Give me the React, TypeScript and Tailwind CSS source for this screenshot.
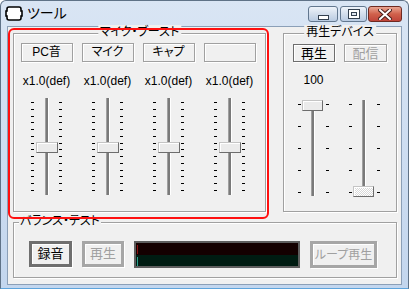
import React from 'react';

const ui = "font-['Liberation_Sans','Noto_Sans_CJK_JP',sans-serif] [font-feature-settings:'palt']";
const etched = 'shadow-[1px_1px_0_#fff,inset_1px_1px_0_#fff]';

interface TrackBarProps {
  ticks: number;
  thumbTop: number;
  wide?: boolean;
  focused?: boolean;
}

// vertical trackbar: ticks on both sides, thumb lies over the groove
const TrackBar: React.FC<TrackBarProps> = ({ ticks, thumbTop, wide, focused }) => {
  const tickCol = (extra: string) => (
    <div className={`flex flex-col justify-between w-[3px] pt-[4px] ${wide ? 'pb-[4px]' : 'pb-[5px]'} ${extra}`}>
      {Array.from({ length: ticks }).map((_, i) => (
        <div key={i} className="h-px bg-black" />
      ))}
    </div>
  );

  return (
    <div className={`flex ${wide ? 'h-[97px]' : 'h-[98px]'}`}>
      {tickCol('')}
      <div className={`relative flex ${wide ? 'w-[25px] pl-[10px]' : 'w-[24px] pl-[11px]'}`}>
        <div className="w-[4px] mb-[1px] border-l border-l-[#a0a0a0] border-r border-r-white bg-[#7a7a7a]" />
        <div
          className={`absolute h-[11px] border border-t-[#c4c4c4] border-l-[#c4c4c4] border-r-[#6d6d6d] border-b-[#6d6d6d] shadow-[inset_1px_1px_0_#fff] ${
            wide ? 'left-[1px] w-[21px]' : 'left-[2px] w-[22px]'
          } ${
            focused
              ? '[background:repeating-conic-gradient(#ffffff_0_25%,#d8d8d8_0_50%)_0_0/2px_2px]'
              : 'bg-[#ebebeb]'
          }`}
          style={{ top: thumbTop }}
        />
      </div>
      {tickCol(wide ? '' : 'ml-[1px]')}
    </div>
  );
};

const boostChannels = ['PC音', 'マイク', 'キャプ', ''];

const CaptionButton: React.FC<{ kind: 'min' | 'max' | 'close' }> = ({ kind }) => {
  if (kind === 'close') {
    return (
      <div className="w-[34px] h-[16px] rounded-[3px] border border-[#6e2a22] bg-gradient-to-b from-[#e8a593] via-[#d0614c] to-[#c0443a] flex items-center justify-center">
        <svg width="14" height="11" viewBox="0 0 14 11">
          <path d="M2 1 L12 10 M12 1 L2 10" stroke="#4a1e19" strokeWidth="4" strokeLinecap="square" />
          <path d="M2 1 L12 10 M12 1 L2 10" stroke="#ffffff" strokeWidth="2" strokeLinecap="square" />
        </svg>
      </div>
    );
  }
  return (
    <div
      className={`${kind === 'min' ? 'w-[30px]' : 'w-[27px]'} h-[16px] rounded-[3px] border border-[#62778f] bg-gradient-to-b from-[#eef3fa] via-[#d3deec] to-[#b9cbe2] flex items-center justify-center`}
    >
      {kind === 'min' ? (
        <svg width="11" height="12" viewBox="0 0 11 12">
          <rect x="0.5" y="7.5" width="10" height="4" fill="#ffffff" stroke="#33404f" />
        </svg>
      ) : (
        <svg width="12" height="10" viewBox="0 0 12 10">
          <rect x="0.5" y="0.5" width="11" height="9" fill="#ffffff" stroke="#33404f" />
          <rect x="3.5" y="3.5" width="5" height="3" fill="#dfe6ef" stroke="#33404f" />
        </svg>
      )}
    </div>
  );
};

export default function App() {
  return (
    <div className={`w-[409px] h-[289px] flex flex-col border border-[#5f7287] border-b-[#5ea4dc] rounded-t-[6px] overflow-hidden bg-gradient-to-b from-[#d9e5f4] to-[#c3d6ee] text-[12px] text-black ${ui}`}>
      {/* title bar */}
      <div className="h-[25px] flex items-start shrink-0">
        <svg className="ml-[4px] mt-[5px]" width="18" height="15" viewBox="0 0 18 15">
          <path
            d="M4 1 H14 Q16 1 16 3 V5 H17 V10 H16 V12 Q16 14 14 14 H4 Q2 14 2 12 V10 H1 V5 H2 V3 Q2 1 4 1 Z"
            fill="#ffffff"
            stroke="#000000"
            strokeWidth="1.6"
          />
        </svg>
        <span className="ml-[4px] mt-[4px] text-[14px] leading-[17px]">ツール</span>
        <div className="flex-1" />
        <div className="flex mt-[5px] mr-[6px]">
          <CaptionButton kind="min" />
          <div className="ml-[2px]">
            <CaptionButton kind="max" />
          </div>
          <div className="ml-[1px]">
            <CaptionButton kind="close" />
          </div>
        </div>
      </div>

      {/* client area */}
      <div className="relative mx-[6px] h-[259px] border border-[#8b9fb7] bg-[#f0f0f0] pl-[5px] pt-[6px]">
        <div className="flex">
          {/* マイク・ブースト */}
          <div className={`relative w-[253px] h-[179px] border border-[#a0a0a0] ${etched} pt-[9px] pl-[2px]`}>
            <span className="absolute top-[-9px] left-1/2 -translate-x-1/2 px-[2px] bg-[#f0f0f0] leading-[15px] whitespace-nowrap">
              マイク・ブースト
            </span>
            <div className="flex">
              {boostChannels.map((name, i) => (
                <div key={i} className="w-[61px] flex flex-col items-center">
                  <div className={`w-[52px] h-[19px] border border-[#a0a0a0] ${etched} flex items-center justify-center leading-[15px]`}>
                    {name}
                  </div>
                  <div className="mt-[12px] h-[15px] leading-[15px]">x1.0(def)</div>
                  <div className="mt-[9px]">
                    <TrackBar ticks={14} thumbTop={44} />
                  </div>
                </div>
              ))}
            </div>
          </div>

          {/* 再生デバイス */}
          <div className={`relative ml-[17px] w-[114px] h-[179px] border border-[#a0a0a0] ${etched} pt-[10px]`}>
            <span className="absolute top-[-9px] left-1/2 -translate-x-1/2 px-[2px] bg-[#f0f0f0] leading-[15px] whitespace-nowrap">
              再生デバイス
            </span>
            <div className="flex pl-[9px] gap-[9px]">
              <div className={`w-[42px] h-[18px] border border-[#6d6d6d] ${etched} flex items-center justify-center text-[13px] leading-[15px]`}>
                再生
              </div>
              <div className={`w-[43px] h-[18px] border border-[#a0a0a0] ${etched} flex items-center justify-center text-[13px] leading-[15px] text-[#a0a0a0]`}>
                配信
              </div>
            </div>
            <div className="flex pl-[14px] gap-[20px]">
              <div className="flex flex-col w-[31px]">
                <div className="mt-[11px] h-[15px] leading-[15px] text-center">100</div>
                <div className="mt-[12px]">
                  <TrackBar ticks={5} thumbTop={0} wide />
                </div>
              </div>
              <div className="flex flex-col w-[31px]">
                <div className="mt-[38px]">
                  <TrackBar ticks={5} thumbTop={86} wide focused />
                </div>
              </div>
            </div>
          </div>
        </div>

        {/* バランス・テスト */}
        <div className={`relative mt-[10px] w-[384px] h-[56px] border border-[#a0a0a0] ${etched} pt-[18px] pl-[15px]`}>
          <span className="absolute top-[-9px] left-[5px] px-[1px] bg-[#f0f0f0] leading-[15px] whitespace-nowrap">
            バランス・テスト
          </span>
          <div className="flex items-start">
            <div className="w-[43px] h-[26px] border-[3px] border-[#6f6f6f] shadow-[inset_1px_1px_0_#fff,1px_1px_0_#fff] flex items-center justify-center text-[13px]">
              録音
            </div>
            <div className="ml-[10px] w-[42px] h-[26px] border-[3px] border-[#a6a6a6] shadow-[inset_1px_1px_0_#fff,1px_1px_0_#fff] flex items-center justify-center text-[13px] text-[#a0a0a0]">
              再生
            </div>
            <div className="ml-[10px] w-[166px] h-[27px] border-2 border-[#5e5e5e] flex flex-col">
              <div className="flex-1 bg-[#140000] pl-[1px] pt-[2px]">
                <div className="w-px h-[9px] bg-[#8a1010]" />
              </div>
              <div className="flex-1 bg-[#001c12] pl-[1px] pt-[2px]">
                <div className="w-px h-[9px] bg-[#2aa08e]" />
              </div>
            </div>
            <div className="ml-[10px] w-[67px] h-[27px] border-[3px] border-[#a6a6a6] shadow-[inset_1px_1px_0_#fff,1px_1px_0_#fff] flex items-center justify-center text-[12px] whitespace-nowrap text-[#a0a0a0]">
              ループ再生
            </div>
          </div>
        </div>

        {/* red highlight around the boost group */}
        <div className="absolute left-0 top-[1px] w-[261px] h-[191px] border-2 border-[#ff1010] rounded-[6px] pointer-events-none" />
      </div>
    </div>
  );
}
